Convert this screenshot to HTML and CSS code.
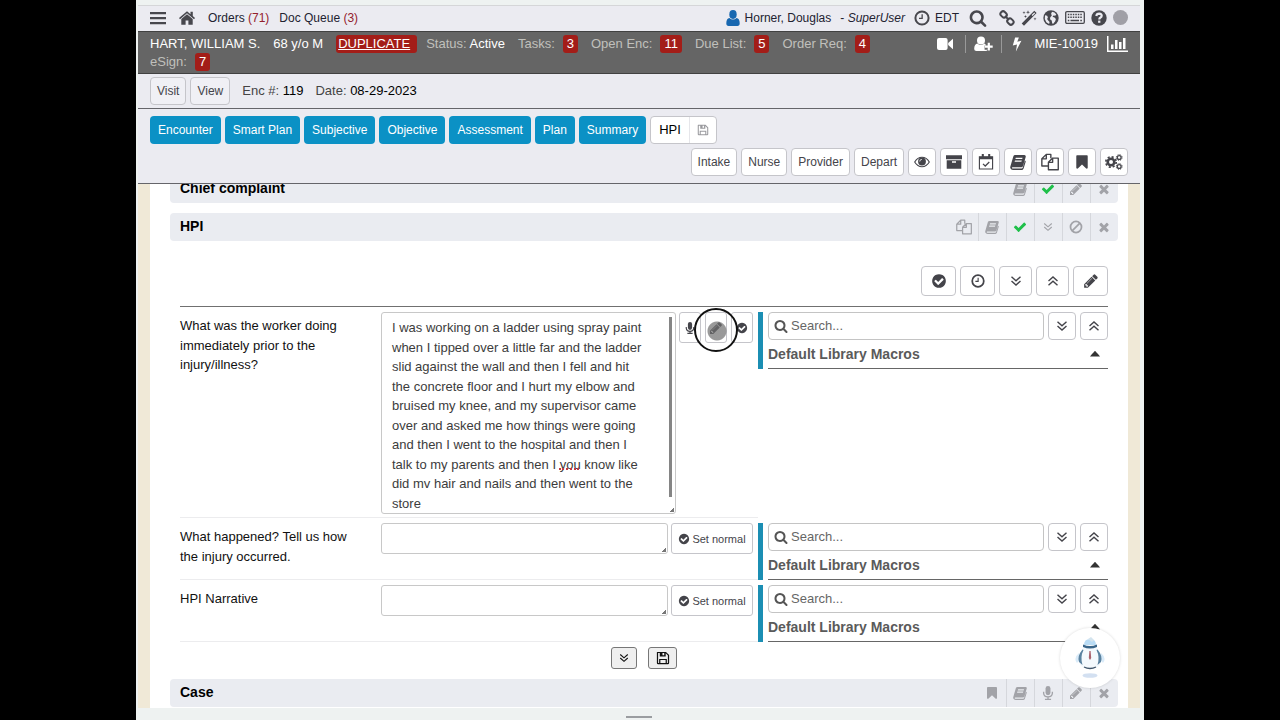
FILE: index.html
```html
<!DOCTYPE html>
<html lang="en">
<head>
<meta charset="utf-8">
<title>HPI - Encounter 119</title>
<link rel="stylesheet" href="styles.css">
</head>
<body>
<svg class="sprite" aria-hidden="true">
  <symbol id="menu" viewBox="0 0 16 16"><path d="M0 2h16v2.300H0zM0 7h16v2.300H0zM0 12h16v2.300H0z"/></symbol>
  <symbol id="home" viewBox="0 0 16 16"><path d="M8 1.200 0 8l1 1.200 7-5.900 7 5.900L16 8l-2.200-1.900V1.800h-2.300v2.400z"/><path d="M8 4.300 2.300 9v5.700h4.300v-4.200h2.800v4.200h4.300V9z"/></symbol>
  <symbol id="user" viewBox="0 0 14 16"><ellipse cx="7" cy="4.500" rx="3.700" ry="4.400"/><path d="M3.500 8q-3.200.6-3.200 5.300Q.3 16 2.600 16h8.800q2.300 0 2.300-2.700 0-4.700-3.200-5.300Q9 9.600 7 9.600T3.500 8z"/></symbol>
  <symbol id="clock" viewBox="0 0 16 16"><path fill-rule="evenodd" d="M8 .4a7.600 7.600 0 1 0 0 15.200A7.600 7.600 0 0 0 8 .4zm0 2a5.600 5.600 0 1 1 0 11.200A5.600 5.600 0 0 1 8 2.400z"/><path d="M7.500 4.200h1.300v4.900H5V7.800h2.500z"/></symbol>
  <symbol id="search" viewBox="0 0 1792 1792"><path d="M1216 832q0-185-131.500-316.500t-316.500-131.500-316.500 131.500-131.500 316.500 131.500 316.500 316.500 131.500 316.500-131.500 131.500-316.500zm512 832q0 52-38 90t-90 38q-54 0-90-38l-343-342q-179 124-399 124-143 0-273.500-55.500t-225-150-150-225-55.500-273.500 55.500-273.500 150-225 225-150 273.500-55.500 273.500 55.500 225 150 150 225 55.500 273.500q0 220-124 399l343 343q37 37 37 90z"/></symbol>
  <symbol id="link" viewBox="0 0 16 16"><g fill="none" stroke="currentColor" stroke-width="2"><rect x="1.300" y="1.800" width="6.600" height="5.200" rx="2.400" transform="rotate(45 4.600 4.400)"/><rect x="8.100" y="9" width="6.600" height="5.200" rx="2.400" transform="rotate(45 11.400 11.600)"/><path d="m6 6 4 4"/></g></symbol>
  <symbol id="wand" viewBox="0 0 16 16"><path fill-rule="evenodd" d="M13.300.8 15.600 3.100 3 15.700.7 13.400zM13.300 2.400 10.600 5.100l.9.900L14.200 3.300z"/><path d="m3 1 .4 1.200 1.200.4-1.200.4L3 4.200 2.600 3l-1.200-.4 1.200-.4zM7 .2l.5 1.500 1.500.5-1.500.5L7 4.200l-.5-1.500L5 2.200l1.500-.5zM14 7.200l.4 1.200 1.200.4-1.200.4-.4 1.200-.4-1.200-1.200-.4 1.200-.4zM4.500 5l.4 1.100 1.100.4-1.100.4-.4 1.100-.4-1.100L3 6.500l1.100-.4z"/></symbol>
  <symbol id="globe" viewBox="0 0 16 16"><circle cx="8" cy="8" r="7.700"/><path class="cut" d="M9 1.800l2.500.6 1.800 2-1.100 1.400-1.700-.3-1 1.300 2 .6 1.400 1.600-.7 2.200-1.900 2.600-1.100-.3-.5-2.900-1.700-1.300.3-2 1.500-1.700-.7-1.900zM2 5.200l2.200.5.700 1.800-.8 1.400 1.300 1.800 1.200 1.400-.5 1.800-2.800-1.700L1.800 9z"/></symbol>
  <symbol id="keyboard" viewBox="0 0 20 13"><rect x=".7" y=".7" width="18.600" height="11.600" rx="1.200" fill="none" stroke="currentColor" stroke-width="1.300"/><path fill="none" stroke="currentColor" stroke-width="1.500" stroke-dasharray="1.500 1" d="M2.800 3.500h14.500M2.800 6.300h14.500M2.800 9.400h1.600"/><path d="M5.500 8.700h8.500v1.500H5.500zM15.300 8.700h1.600v1.500h-1.600z"/></symbol>
  <symbol id="help" viewBox="0 0 16 16"><circle cx="8" cy="8" r="7.700"/><path fill="none" class="cut-line" stroke-width="2.200" d="M5.300 6q.3-2.400 2.900-2.400 2.500.1 2.500 2.200 0 1.200-1.500 2-.9.500-.9 1.600"/><path class="cut" d="M7.100 10.600h2.300v2.200H7.100z"/></symbol>
  <symbol id="video" viewBox="0 0 16 12"><rect width="10.600" height="12" rx="2"/><path d="M11.200 5 16 .8v10.400L11.200 7z"/></symbol>
  <symbol id="user-plus" viewBox="0 0 19 16"><circle cx="7" cy="4.500" r="4"/><path d="M3.500 7.500Q.2 8.200.2 13q0 2 2.200 2h9.200q1.600 0 2-1.300h-3V9.600h1.500q-.5-1.700-1.700-2Q9 9 7 9T3.500 7.500z"/><path d="M13.700 6.800h2.200v2.800h2.800v2.200h-2.800v2.800h-2.200v-2.800h-2.800V9.600h2.800z"/></symbol>
  <symbol id="bolt" viewBox="0 0 10 16"><path d="M3 .5h4L5.300 5l4.400-1L3.800 15.500 5 8 .5 9.100z"/></symbol>
  <symbol id="chart" viewBox="0 0 21 16"><path d="M0 0h1.500v14.500H21V16H0zM4 8.500h2.500V13H4zM8 4h2.500v9H8zM12 6h2.500v7H12zM16 2h2.500v11H16z"/></symbol>
  <symbol id="save" viewBox="0 0 16 16"><path fill-rule="evenodd" d="M1.500 1h9.900L15 4.600v9q0 1.400-1.400 1.400H2.400Q1 15 1 13.600V1.500zM2.400 2.400v11.200h1.200V9h8.800v4.600h1.200V5.200l-2.500-2.600v3.600H4.300V2.400zM7.400 2.400v2.500h2V2.400zM5 10.300v3.300h6v-3.300z"/></symbol>
  <symbol id="eye" viewBox="0 0 18 14"><path fill="none" stroke="currentColor" stroke-width="1.300" d="M.8 7Q4 1.700 9 1.700T17.200 7Q14 12.300 9 12.300T.8 7z"/><path fill-rule="evenodd" d="M9 2a4.400 4.400 0 1 0 0 8.800A4.400 4.400 0 0 0 9 2zM8.900 3.500v1Q7 4.600 6.900 6.500h-1q.1-2.800 3-3z"/></symbol>
  <symbol id="archive" viewBox="0 0 16 16"><path fill-rule="evenodd" d="M0 1.200h16v4H0zM.7 6.200h14.600v8.600H.7zM6 7.300v1.400h4V7.300z"/></symbol>
  <symbol id="calendar" viewBox="0 0 16 17"><path fill="none" stroke="currentColor" stroke-width="1.200" d="M1 3h14v13H1z"/><path d="M1 3h14v2.500H1zM3.500 0h2.200v4H3.500zM10.300 0h2.200v4h-2.200z"/><path fill="none" stroke="currentColor" stroke-width="1.300" d="m4.800 10.500 2.400 2.300 4.300-4.300"/></symbol>
  <symbol id="book" viewBox="0 0 16 16"><path fill-rule="evenodd" d="M5.200 1h9.200q1.700.2 1.300 1.900L13 12q-.4 1.200-1.600 1.200H2.500q-.8.300-.4 1 .2.400 1 .4h8.500q.8 0 1.100-.8l2.200-7.300q1 .4.800 1.300l-2.100 6.700Q12.900 16 11.600 16H3Q1 15.900.4 14.300 0 13.400.5 12L3.300 2.400Q3.700 1 5.200 1zm.6 2.800-.4 1.300h6.800l.4-1.300zm-.8 2.600-.4 1.300h6.800l.4-1.300z"/></symbol>
  <symbol id="copy" viewBox="0 0 17 16"><g fill="none" stroke="currentColor" stroke-width="1.300" stroke-linejoin="round"><path d="M9.300 4.500V.8H5L.8 5v6.800h5.800M5 .8V5H.8"/><path d="M11 4.300h5.300v11H7v-7zM11 4.300v4H7"/></g></symbol>
  <symbol id="bookmark" viewBox="0 0 1792 1792"><path d="M1420 128q23 0 44 9 33 13 52.500 41t19.500 62v1289q0 34-19.500 62t-52.500 41q-19 8-44 8-48 0-83-32l-441-424-441 424q-36 33-83 33-23 0-44-9-33-13-52.500-41t-19.500-62v-1289q0-34 19.500-62t52.500-41q21-9 44-9h1048z"/></symbol>
  <symbol id="gears" viewBox="0 0 18 16"><g fill="none" stroke="currentColor"><circle cx="6" cy="8" r="3.300" stroke-width="2.600"/><circle cx="6" cy="8" r="5.200" stroke-width="1.700" stroke-dasharray="2.100 1.984"/><circle cx="14.200" cy="3.500" r="1.900" stroke-width="1.300"/><circle cx="14.200" cy="3.500" r="2.900" stroke-width="1" stroke-dasharray="1.200 1.077"/><circle cx="14.200" cy="12.500" r="1.900" stroke-width="1.300"/><circle cx="14.200" cy="12.500" r="2.900" stroke-width="1" stroke-dasharray="1.200 1.077"/></g></symbol>
  <symbol id="check" viewBox="0 0 1792 1792"><path d="M1671 566q0 40-28 68l-724 724-136 136q-28 28-68 28t-68-28l-136-136-362-362q-28-28-28-68t28-68l136-136q28-28 68-28t68 28l294 295 656-657q28-28 68-28t68 28l136 136q28 28 28 68z"/></symbol>
  <symbol id="pencil" viewBox="0 0 1792 1792"><path d="M491 1536l91-91-235-235-91 91v107h128v128h107zm523-928q0-22-22-22-10 0-17 7l-542 542q-7 7-7 17 0 22 22 22 10 0 17-7l542-542q7-7 7-17zm-54-192l416 416-832 832h-416v-416zm683 96q0 53-37 90l-166 166-416-416 166-165q36-38 90-38 53 0 91 38l235 234q37 39 37 91z"/></symbol>
  <symbol id="times" viewBox="0 0 1792 1792"><path d="M1490 1322q0 40-28 68l-136 136q-28 28-68 28t-68-28l-294-294-294 294q-28 28-68 28t-68-28l-136-136q-28-28-28-68t28-68l294-294-294-294q-28-28-28-68t28-68l136-136q28-28 68-28t68 28l294 294 294-294q28-28 68-28t68 28l136 136q28 28 28 68t-28 68l-294 294 294 294q28 28 28 68z"/></symbol>
  <symbol id="ban" viewBox="0 0 16 16"><g fill="none" stroke="currentColor" stroke-width="2"><circle cx="8" cy="8" r="6.300"/><path d="m3.600 12.400 8.800-8.800"/></g></symbol>
  <symbol id="down" viewBox="0 0 12 12"><path fill="none" stroke="currentColor" stroke-width="1.400" d="m1.500 1.800 4.500 4 4.500-4M1.500 6l4.500 4 4.500-4"/></symbol>
  <symbol id="up" viewBox="0 0 12 12"><path fill="none" stroke="currentColor" stroke-width="1.400" d="m1.500 6 4.500-4 4.500 4m-9 4.200 4.500-4 4.500 4"/></symbol>
  <symbol id="check-circle" viewBox="0 0 1792 1792"><path d="M1412 734q0-28-18-46l-91-90q-19-19-45-19t-45 19l-408 407-226-226q-19-19-45-19t-45 19l-91 90q-18 18-18 46 0 27 18 45l362 362q19 19 45 19 27 0 46-19l543-543q18-18 18-45zm252 162q0 209-103 385.500t-279.500 279.500-385.500 103-385.500-103-279.500-279.500-103-385.500 103-385.500 279.500-279.500 385.500-103 385.500 103 279.500 279.500 103 385.500z"/></symbol>
  <symbol id="mic" viewBox="0 0 16 16"><rect x="5.200" y="0" width="5.600" height="10.500" rx="2.800"/><path fill="none" stroke="currentColor" stroke-width="1.500" d="M3 6.500v1.700q.3 4 5 4.300 4.700-.3 5-4.300V6.500M8 12.500V15M4.500 15.200h7"/></symbol>
  <symbol id="caret" viewBox="0 0 10 6"><path d="M5 0q.5 0 5 5.500H0Q4.500 0 5 0z"/></symbol>
</svg>

<div class="app">
  <header class="topbar">
    <button class="plain" aria-label="Menu"><svg class="i16"><use href="#menu"/></svg></button>
    <a class="home" href="#" aria-label="Home"><svg class="i16"><use href="#home"/></svg></a>
    <a href="#">Orders <span class="count">(71)</span></a>
    <a href="#">Doc Queue <span class="count">(3)</span></a>
    <div class="account">
      <svg class="person"><use href="#user"/></svg>
      <span>Horner, Douglas</span><span class="role">- <em>SuperUser</em></span>
      <svg class="i16"><use href="#clock"/></svg><span>EDT</span>
    </div>
    <div class="tools">
      <button class="plain find" aria-label="Search"><svg class="i18"><use href="#search"/></svg></button>
      <button class="plain" aria-label="Links"><svg class="i16"><use href="#link"/></svg></button>
      <button class="plain" aria-label="Wizard"><svg class="i16"><use href="#wand"/></svg></button>
      <button class="plain" aria-label="Web"><svg class="i16"><use href="#globe"/></svg></button>
      <button class="plain" aria-label="Keyboard"><svg class="keys"><use href="#keyboard"/></svg></button>
      <button class="plain" aria-label="Help"><svg class="i16"><use href="#help"/></svg></button>
      <span class="presence"></span>
    </div>
  </header>

  <section class="patient">
    <div class="facts">
      <span>HART, WILLIAM S.</span>
      <span>68 y/o M</span>
      <a class="badge duplicate" href="#">DUPLICATE</a>
      <span><span class="dim">Status:</span> Active</span>
      <span class="fact"><span class="dim">Tasks:</span><a class="badge" href="#">3</a></span>
      <span class="fact"><span class="dim">Open Enc:</span><a class="badge" href="#">11</a></span>
      <span class="fact"><span class="dim">Due List:</span><a class="badge" href="#">5</a></span>
      <span class="fact"><span class="dim">Order Req:</span><a class="badge" href="#">4</a></span>
      <span class="fact"><span class="dim">eSign:</span><a class="badge" href="#">7</a></span>
    </div>
    <div class="links">
      <button class="plain video" aria-label="Video"><svg><use href="#video"/></svg></button>
      <button class="plain add" aria-label="Add person"><svg><use href="#user-plus"/></svg></button>
      <button class="plain bolt" aria-label="Quick actions"><svg><use href="#bolt"/></svg></button>
      <span>MIE-10019</span>
      <button class="plain chart" aria-label="Chart"><svg><use href="#chart"/></svg></button>
    </div>
  </section>

  <section class="encounter">
    <button class="btn ghost">Visit</button>
    <button class="btn ghost">View</button>
    <span class="detail">Enc #: <b>119</b></span>
    <span class="detail">Date: <b>08-29-2023</b></span>
  </section>

  <nav class="nav">
    <div class="tabs">
      <button class="tab">Encounter</button>
      <button class="tab">Smart Plan</button>
      <button class="tab">Subjective</button>
      <button class="tab">Objective</button>
      <button class="tab">Assessment</button>
      <button class="tab">Plan</button>
      <button class="tab">Summary</button>
      <div class="current"><button class="current-name">HPI</button><button class="current-save" aria-label="Save HPI"><svg class="i12"><use href="#save"/></svg></button></div>
    </div>
    <div class="actions">
      <button class="btn">Intake</button>
      <button class="btn">Nurse</button>
      <button class="btn">Provider</button>
      <button class="btn">Depart</button>
      <button class="btn square" aria-label="View"><svg class="i16"><use href="#eye"/></svg></button>
      <button class="btn square" aria-label="Archive"><svg class="i16"><use href="#archive"/></svg></button>
      <button class="btn square" aria-label="Schedule"><svg class="i16"><use href="#calendar"/></svg></button>
      <button class="btn square" aria-label="Library"><svg class="i16"><use href="#book"/></svg></button>
      <button class="btn square" aria-label="Copy"><svg class="i18"><use href="#copy"/></svg></button>
      <button class="btn square" aria-label="Bookmark"><svg class="i16"><use href="#bookmark"/></svg></button>
      <button class="btn square" aria-label="Settings"><svg class="i18"><use href="#gears"/></svg></button>
    </div>
  </nav>

  <main class="page">
    <div class="sheet">
      <header class="bar">
        <h2>Chief complaint</h2>
        <button aria-label="Library"><svg class="i14"><use href="#book"/></svg></button>
        <button class="done" aria-label="Done"><svg class="i14"><use href="#check"/></svg></button>
        <button aria-label="Edit"><svg class="i14"><use href="#pencil"/></svg></button>
        <button aria-label="Remove"><svg class="i14"><use href="#times"/></svg></button>
      </header>
      <header class="bar">
        <h2>HPI</h2>
        <button aria-label="Copy"><svg class="i16"><use href="#copy"/></svg></button>
        <button aria-label="Library"><svg class="i14"><use href="#book"/></svg></button>
        <button class="done" aria-label="Done"><svg class="i14"><use href="#check"/></svg></button>
        <button aria-label="Expand"><svg class="i10"><use href="#down"/></svg></button>
        <button aria-label="Clear"><svg class="i14"><use href="#ban"/></svg></button>
        <button aria-label="Remove"><svg class="i14"><use href="#times"/></svg></button>
      </header>

      <section class="form">
        <div class="form-tools">
          <button class="btn wide" aria-label="Set all normal"><svg class="i16"><use href="#check-circle"/></svg></button>
          <button class="btn wide" aria-label="History"><svg class="i14"><use href="#clock"/></svg></button>
          <button class="btn" aria-label="Expand all"><svg class="i12"><use href="#down"/></svg></button>
          <button class="btn" aria-label="Collapse all"><svg class="i12"><use href="#up"/></svg></button>
          <button class="btn wide" aria-label="Edit"><svg class="i16"><use href="#pencil"/></svg></button>
        </div>

        <div class="row">
          <label class="question" for="q1">What was the worker doing immediately prior to the injury/illness?</label>
          <div class="answer">
            <div class="field">
              <textarea id="q1" class="long" spellcheck="false">I was working on a ladder using spray paint when I tipped over a little far and the ladder slid against the wall and then I fell and hit the concrete floor and I hurt my elbow and bruised my knee, and my supervisor came over and asked me how things were going and then I went to the hospital and then I talk to my parents and then I you know like did mv hair and nails and then went to the store</textarea>
              <span class="misspelt"></span>
              <span class="thumb"></span>
            </div>
            <div class="trio">
              <button class="btn tall" aria-label="Dictate"><svg class="i12"><use href="#mic"/></svg></button>
              <button class="btn tall pointed" aria-label="Rewrite"><svg class="i14"><use href="#pencil"/></svg><span class="pointer"></span></button>
              <button class="btn tall" aria-label="Set normal"><svg class="i12"><use href="#check-circle"/></svg></button>
            </div>
          </div>
          <div class="macros">
            <div class="macro-search">
              <div class="search"><svg class="i14"><use href="#search"/></svg><input type="search" aria-label="Search macros" placeholder="Search..."></div>
              <button class="btn square" aria-label="Expand"><svg class="i12"><use href="#down"/></svg></button>
              <button class="btn square" aria-label="Collapse"><svg class="i12"><use href="#up"/></svg></button>
            </div>
            <h3>Default Library Macros <svg class="caret"><use href="#caret"/></svg></h3>
          </div>
        </div>

        <div class="row">
          <label class="question" for="q2">What happened? Tell us how the injury occurred.</label>
          <div class="answer">
            <div class="field"><textarea id="q2" class="short"></textarea></div>
            <button class="btn tall normal"><svg class="i12"><use href="#check-circle"/></svg>Set normal</button>
          </div>
          <div class="macros">
            <div class="macro-search">
              <div class="search"><svg class="i14"><use href="#search"/></svg><input type="search" aria-label="Search macros" placeholder="Search..."></div>
              <button class="btn square" aria-label="Expand"><svg class="i12"><use href="#down"/></svg></button>
              <button class="btn square" aria-label="Collapse"><svg class="i12"><use href="#up"/></svg></button>
            </div>
            <h3>Default Library Macros <svg class="caret"><use href="#caret"/></svg></h3>
          </div>
        </div>

        <div class="row">
          <label class="question" for="q3">HPI Narrative</label>
          <div class="answer">
            <div class="field"><textarea id="q3" class="short"></textarea></div>
            <button class="btn tall normal"><svg class="i12"><use href="#check-circle"/></svg>Set normal</button>
          </div>
          <div class="macros">
            <div class="macro-search">
              <div class="search"><svg class="i14"><use href="#search"/></svg><input type="search" aria-label="Search macros" placeholder="Search..."></div>
              <button class="btn square" aria-label="Expand"><svg class="i12"><use href="#down"/></svg></button>
              <button class="btn square" aria-label="Collapse"><svg class="i12"><use href="#up"/></svg></button>
            </div>
            <h3>Default Library Macros <svg class="caret"><use href="#caret"/></svg></h3>
          </div>
        </div>

        <div class="form-end">
          <button class="mini" aria-label="Next section"><svg class="i10"><use href="#down"/></svg></button>
          <button class="mini save" aria-label="Save"><svg class="i14"><use href="#save"/></svg></button>
        </div>
      </section>

      <header class="bar">
        <h2>Case</h2>
        <button aria-label="Bookmark"><svg class="i14"><use href="#bookmark"/></svg></button>
        <button aria-label="Library"><svg class="i14"><use href="#book"/></svg></button>
        <button aria-label="Dictate"><svg class="i14"><use href="#mic"/></svg></button>
        <button aria-label="Edit"><svg class="i14"><use href="#pencil"/></svg></button>
        <button aria-label="Remove"><svg class="i14"><use href="#times"/></svg></button>
      </header>
    </div>
  </main>

  <footer class="grip"><span></span></footer>

  <button class="helper" aria-label="Assistant">
    <svg viewBox="0 0 32 42">
      <ellipse cx="16" cy="38.500" rx="7.500" ry="2.300" fill="#d3e0f1"/>
      <path d="M5 16Q-1 21 3 26l4-5zM27 16q6 5 2 10l-4-5z" fill="#d9ebf9"/>
      <path d="M10 10Q4 17 5 24q1 8 11 8t11-8q1-7-5-14z" fill="#f4f9fd"/>
      <path d="M8.500 12.500Q3 19 5 25l3.500 3Q6 20 9.500 13zM23.500 12.500Q29 19 27 25l-3.500 3q2.500-8-1-15z" fill="#5a82a0"/>
      <path d="M10 30q6 3 12 0" fill="none" stroke="#42566b" stroke-width="1.300"/>
      <path d="M10 8q0-6 6-6t6 6z" fill="#b9dcf5"/><path d="m14 2 3-2 3 3-2 2z" fill="#d4e4ee"/>
      <path d="M9 7.500q7 3 14 0V10q-7 3-14 0z" fill="#3a668a"/>
      <path d="m15.400 14-.6 7 1.200 2 1.200-2-.6-7z" fill="#a9606c"/>
    </svg>
  </button>
</div>
</body>
</html>
```
FILE: styles.css
```css
* { box-sizing: border-box; }

body {
  margin: 0;
  padding: 0 136px;
  background: #000;
  color: #111;
  font: 13px/1.5 "Liberation Sans", Arial, sans-serif;
}

button, input, textarea { font: inherit; color: inherit; margin: 0; }
button { cursor: pointer; }
a { color: inherit; text-decoration: none; }
svg { display: block; fill: currentColor; flex: none; }
.sprite { position: absolute; width: 0; height: 0; }

.i10 { width: 10px; height: 10px; }
.i12 { width: 12px; height: 12px; }
.i14 { width: 14px; height: 14px; }
.i16 { width: 16px; height: 16px; }
.i18 { width: 18px; height: 18px; }
.cut { fill: #ebebf1; }
.cut-line { stroke: #ebebf1; }

.app {
  position: relative;
  display: flex;
  flex-direction: column;
  height: 100vh;
  padding: 5px 4px 0 2px;
  background: #eef2f1;
  overflow: hidden;
}

.plain { display: flex; padding: 0; border: 0; background: none; }

/* Application bar */
.topbar {
  display: flex;
  align-items: center;
  height: 26px;
  flex: none;
  padding: 0 12px 2px;
  gap: 10px;
  border-top: 1px solid #d5d6d8;
  background: #ebebf1;
  color: #222230;
  font-size: 12px;
}
.topbar svg { color: #47474d; }
.home { margin: 0 3px; }
.count { color: #94202c; }
.account { display: flex; align-items: center; gap: 5px; margin-left: auto; }
.topbar .person { width: 14px; height: 16px; color: #1767b0; }
.role { margin: 0 4px; }
.tools { display: flex; align-items: center; gap: 6px; }
.find { margin-right: 6px; }
.keys { width: 20px; height: 13px; }
.presence { width: 15px; height: 15px; border-radius: 50%; background: #a09fa6; }

/* Patient bar */
.patient {
  display: flex;
  gap: 12px;
  flex: none;
  padding: 3px 12px 2px;
  border-top: 1px solid #414141;
  border-bottom: 1px solid #414141;
  background: #656565;
  color: #fff;
  line-height: 18px;
}
.facts { display: flex; flex-wrap: wrap; column-gap: 13px; flex: 1; }
.fact { display: flex; gap: 8px; }
.dim { color: #c0c0bc; }
.badge { padding: 0 4px; border-radius: 3px; background: #a31d18; }
.duplicate { padding: 0 7px 0 2px; text-decoration: underline; margin-right: -4px; }
.links { display: flex; align-items: center; height: 18px; }
.video svg { width: 16px; height: 12px; }
.add { margin-left: 12px; padding: 0 8px; border-left: 1px solid #999; border-right: 1px solid #999; }
.add svg { width: 19px; height: 18px; }
.bolt { margin: 0 12px 0 10px; }
.bolt svg { width: 10px; height: 15px; }
.chart { margin-left: 9px; }
.chart svg { width: 21px; height: 16px; }

/* Encounter bar */
.encounter {
  display: flex;
  align-items: center;
  gap: 4px;
  height: 35px;
  flex: none;
  padding: 0 12px;
  border-bottom: 1px solid #65656a;
  background: #ebebf1;
}
.detail { margin-left: 8px; color: #444; }
.detail b { color: #000; font-weight: 400; }

.btn {
  display: flex;
  align-items: center;
  justify-content: center;
  height: 28px;
  padding: 0 6px;
  border: 1px solid #c5c5ca;
  border-radius: 4px;
  background: #fff;
  color: #44444a;
  font-size: 12px;
  line-height: 18px;
}
.ghost { background: #f0f0f5; }
.square { width: 28px; padding: 0; }

/* Section navigation */
.nav {
  display: flex;
  flex-direction: column;
  gap: 4px;
  flex: none;
  padding: 7px 12px;
  border-bottom: 1px solid #65656a;
  background: #ebebf1;
}
.tabs, .actions { display: flex; gap: 4px; }
.actions { justify-content: flex-end; }
.tab {
  height: 28px;
  padding: 0 8px;
  border: 0;
  border-radius: 4px;
  background: #0b91c5;
  color: #fff;
  font-size: 12px;
}
.current {
  display: flex;
  height: 28px;
  border: 1px solid #c5c5ca;
  border-radius: 4px;
  background: #fff;
}
.current button { display: flex; align-items: center; border: 0; background: none; }
.current-name { padding: 0 8px; color: #000; }
.current-save { padding: 0 7px; color: #9a9a9e; }
.current .current-save { border-left: 1px solid #e6e6ea; }

/* Scrolled chart sheet */
.page {
  flex: 1;
  min-height: 0;
  padding: 0 12px;
  background: #f0e9d7;
  overflow: hidden;
}
.sheet {
  display: flex;
  flex-direction: column;
  gap: 10px;
  margin-top: -9px;
  padding: 0 10px 2px 20px;
  background: #fff;
}
.bar {
  display: flex;
  height: 28px;
  border-radius: 4px;
  background: #eaecf1;
  color: #a2a3a8;
}
h2 { flex: 1; margin: 0; padding-left: 10px; color: #000; font-size: 14px; line-height: 27px; }
.bar button {
  display: flex;
  align-items: center;
  justify-content: center;
  width: 28px;
  padding: 0 1px 0 0;
  border: 0;
  background: none;
}
.bar button + button { border-left: 1px solid #d5d7dc; }
.bar .done { color: #1fc04a; }

.form { padding: 15px 10px 0; }
.form-tools {
  display: flex;
  justify-content: flex-end;
  gap: 4px;
  padding-bottom: 10px;
  border-bottom: 1px solid #707070;
}
.form-tools .btn { width: 33px; height: 30px; padding: 0; }
.form-tools .wide { width: 35px; }

.row { display: grid; grid-template-columns: 201fr 377fr 350fr; padding-top: 5px; }
.question { padding: 4px 28px 0 0; border-bottom: 1px solid #ececee; color: #111; }
.answer {
  display: flex;
  align-items: flex-start;
  gap: 3px;
  padding: 0 5px 3px 0;
  border-bottom: 1px solid #ececee;
}
.field { position: relative; display: flex; flex: 1; }
textarea {
  width: 100%;
  padding: 5px 30px 0 10px;
  border: 1px solid #c8c8c8;
  border-radius: 3px;
  background: linear-gradient(135deg, transparent 50%, #777 50%) no-repeat right 1px bottom 1px / 4px 4px #fff;
  color: #3c3c3c;
  resize: none;
  overflow: hidden;
}
.long { height: 202px; }
.short { height: 31px; }
.misspelt { position: absolute; left: 178px; top: 156px; width: 20px; border-bottom: 2px dotted #c03a44; }
.thumb { position: absolute; right: 4px; top: 5px; bottom: 17px; width: 3px; background: #858585; }
.trio { display: flex; gap: 4px; }
.tall { height: 31px; border-radius: 3px; }
.trio .btn { width: 22px; padding: 0; }
.normal { gap: 2px; font-size: 11px; width: 82px; padding: 0; }
.pointed { position: relative; }
.pointer {
  position: absolute;
  left: -12px;
  top: -5px;
  width: 44px;
  height: 44px;
  border: 2px solid #111;
  border-radius: 50%;
  background: radial-gradient(circle at 21px 21px, rgba(110, 110, 110, 0.7) 9px, transparent 10px);
}

.macros { align-self: start; padding-left: 5px; border-left: 5px solid #1b8eb3; }
.macro-search { display: flex; gap: 4px; }
.search {
  display: flex;
  align-items: center;
  gap: 3px;
  flex: 1;
  height: 28px;
  padding: 0 5px;
  border: 1px solid #c4c4c4;
  border-radius: 4px;
  color: #555;
}
.search input { flex: 1; min-width: 0; padding: 0; border: 0; outline: 0; background: none; }
.search input::placeholder { color: #666; }
h3 {
  display: flex;
  align-items: center;
  justify-content: space-between;
  margin: 0;
  padding-right: 8px;
  border-bottom: 1px solid #666;
  color: #5a5a5a;
  font-size: 14px;
  line-height: 28px;
}
.caret { width: 10px; height: 6px; color: #333; }

.form-end { display: flex; justify-content: center; gap: 11px; padding-top: 5px; }
.mini {
  display: flex;
  align-items: center;
  justify-content: center;
  width: 26px;
  height: 22px;
  padding: 0;
  border: 1px solid #777;
  border-radius: 3px;
  background: #efefef;
  color: #111;
}
.mini.save { width: 29px; }

.grip { display: flex; justify-content: center; align-items: flex-end; height: 12px; flex: none; padding-bottom: 2px; }
.grip span { width: 26px; height: 2px; background: #9a9da0; }

/* Floating assistant */
.helper {
  position: absolute;
  right: 24px;
  bottom: 32px;
  display: flex;
  justify-content: center;
  align-items: center;
  width: 60px;
  height: 60px;
  padding: 0;
  border: 0;
  border-radius: 50%;
  background: #fff;
  box-shadow: 0 0 3px rgba(0, 0, 0, 0.15);
}
.helper svg { width: 32px; height: 42px; }
```
